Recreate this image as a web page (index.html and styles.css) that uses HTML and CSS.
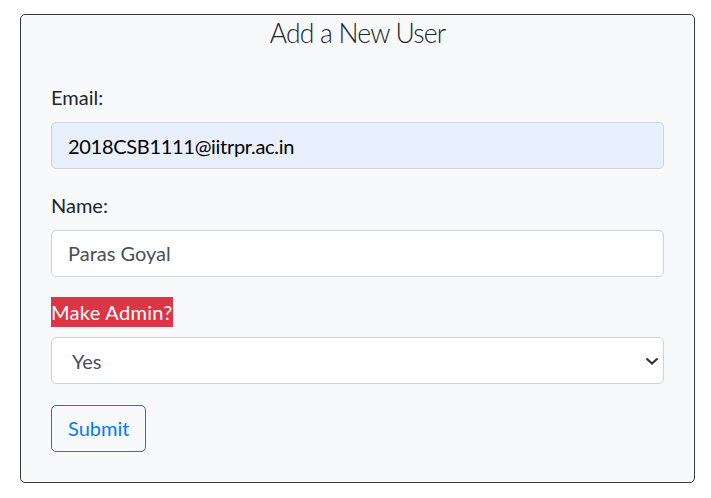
FILE: index.html
```html
<!DOCTYPE html>
<html lang="en">
<head>
<meta charset="utf-8">
<title>Add a New User</title>
<link rel="stylesheet" href="styles.css">
</head>
<body>
<div class="card">
  <h2 class="title">Add a New User</h2>
  <form class="form">
    <div class="group">
      <label class="label" for="email">Email:</label>
      <input class="control autofill" id="email" type="text" value="2018CSB1111@iitrpr.ac.in">
    </div>
    <div class="group">
      <label class="label" for="name">Name:</label>
      <input class="control" id="name" type="text" value="Paras Goyal">
    </div>
    <div class="group">
      <label class="label" for="admin"><span class="badge-danger">Make Admin?</span></label>
      <select class="control select" id="admin">
        <option>Yes</option>
        <option>No</option>
      </select>
    </div>
    <div class="actions">
      <button type="button" class="btn-outline">Submit</button>
    </div>
  </form>
</div>
</body>
</html>
```
FILE: styles.css
```css
html, body {
  margin: 0;
  background: #ffffff;
}
body {
  padding: 14px 16px 16px 20px;
  font-family: Lato, "Open Sans", "Liberation Sans", sans-serif;
  color: #212529;
}
.card {
  border: 1px solid #343a40;
  border-radius: 5px;
  background: #f8f9fa;
  padding: 2px 30px 30px;
}
.title {
  margin: 0 0 32px;
  font-size: 26.5px;
  font-weight: 300;
  line-height: 33px;
  letter-spacing: -0.8px;
  text-align: center;
  color: #212529;
}
.form {
  display: flex;
  flex-direction: column;
}
.group {
  display: flex;
  flex-direction: column;
  margin-bottom: 20.5px;
}
.label {
  display: block;
  font-size: 20px;
  line-height: 30px;
  height: 30px;
  margin-bottom: 10px;
}
.badge-danger {
  background: #dc3545;
  color: #ffffff;
  display: inline-block;
  line-height: 30px;
  letter-spacing: 0.3px;
}
.control {
  box-sizing: border-box;
  width: 100%;
  height: 47px;
  margin: 0;
  padding: 0 16px;
  font-family: inherit;
  font-size: 20px;
  color: #495057;
  background: #ffffff;
  border: 1px solid #ced4da;
  border-radius: 5px;
  outline: none;
}
.autofill {
  background: #e8f0fe;
  color: #000000;
  letter-spacing: -0.3px;
}
.select {
  appearance: none;
  -webkit-appearance: none;
  padding-left: 20px;
  background-image: url("data:image/svg+xml,%3Csvg xmlns='http://www.w3.org/2000/svg' width='14' height='8' viewBox='0 0 14 8'%3E%3Cpath d='M1.5 1.5 L7 6.5 L12.5 1.5' fill='none' stroke='%23333' stroke-width='2.2'/%3E%3C/svg%3E");
  background-repeat: no-repeat;
  background-position: right 4px center;
  background-size: 14px 8px;
}
.actions {
  display: flex;
}
.btn-outline {
  box-sizing: border-box;
  height: 47px;
  padding: 0 16px;
  font-family: inherit;
  font-size: 20px;
  color: #007bff;
  background: transparent;
  border: 1px solid #007bff;
  border-radius: 5px;
  cursor: pointer;
}
```
